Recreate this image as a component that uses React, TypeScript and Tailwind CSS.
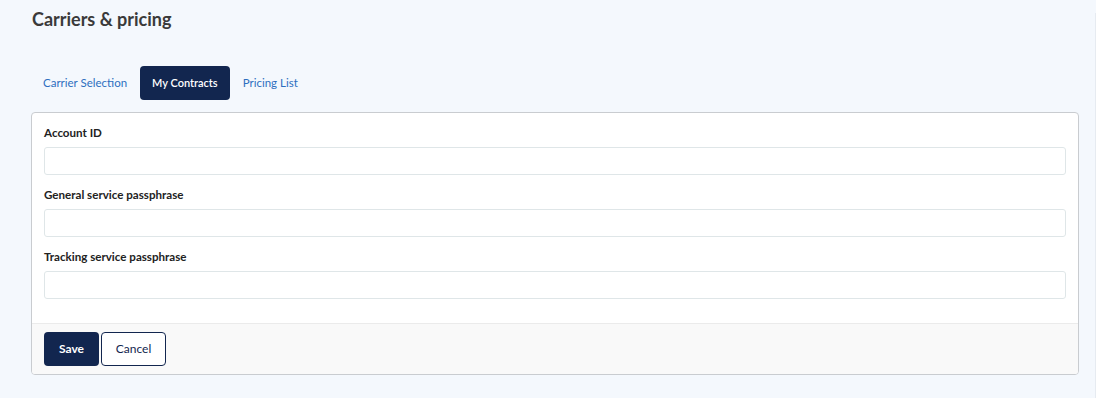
import React from "react";

const font = { fontFamily: '"Source Sans Pro", Lato, "Noto Sans", sans-serif' };

function Field({ label }: { label: string }) {
  return (
    <div className="mb-[11px]">
      <div className="h-[18px] leading-[18px] text-[11.6px] font-bold text-[#222] mb-[5px]">{label}</div>
      <input className="block w-full h-[28px] border border-[#dfe6e8] rounded-[3px] bg-white outline-none" />
    </div>
  );
}

export default function App() {
  return (
    <div className="relative w-[1096px] h-[398px] bg-[#f4f8fd] overflow-hidden" style={font}>
      <div className="absolute right-0 top-[13px] bottom-0 w-px bg-[#e6ebf1]" />
      <div className="pl-[32px] pt-[7px] h-[66px]">
        <h1 className="text-[18px] leading-[24px] font-bold text-[#3a3a3a]">Carriers &amp; pricing</h1>
      </div>
      <div className="flex pl-[31px] gap-[1px] h-[34px] text-[11.5px]">
        <div className="px-[12px] flex items-center text-[#2d6fbf] rounded-[4px]">Carrier Selection</div>
        <div className="px-[12px] flex items-center bg-[#12264f] text-white font-semibold rounded-[4px] text-[11px]">My Contracts</div>
        <div className="px-[12px] flex items-center text-[#2d6fbf] rounded-[4px]">Pricing List</div>
      </div>
      <div className="ml-[31px] mt-[12px] w-[1048px] border border-[#c9ccd0] rounded-[4px] bg-white overflow-hidden">
        <div className="px-[12px] pt-[11px] pb-[13px]">
          <Field label="Account ID" />
          <Field label="General service passphrase" />
          <Field label="Tracking service passphrase" />
        </div>
        <div className="border-t border-[#ebebeb] bg-[#f9f9f9] px-[12px] py-[8px] flex gap-[2px]">
          <button className="h-[34px] w-[55px] rounded-[4px] bg-[#12264f] text-white text-[12px] font-bold">Save</button>
          <button className="h-[34px] w-[65px] rounded-[4px] bg-white border border-[#12264f] text-[#12264f] text-[12px]">Cancel</button>
        </div>
      </div>
    </div>
  );
}
